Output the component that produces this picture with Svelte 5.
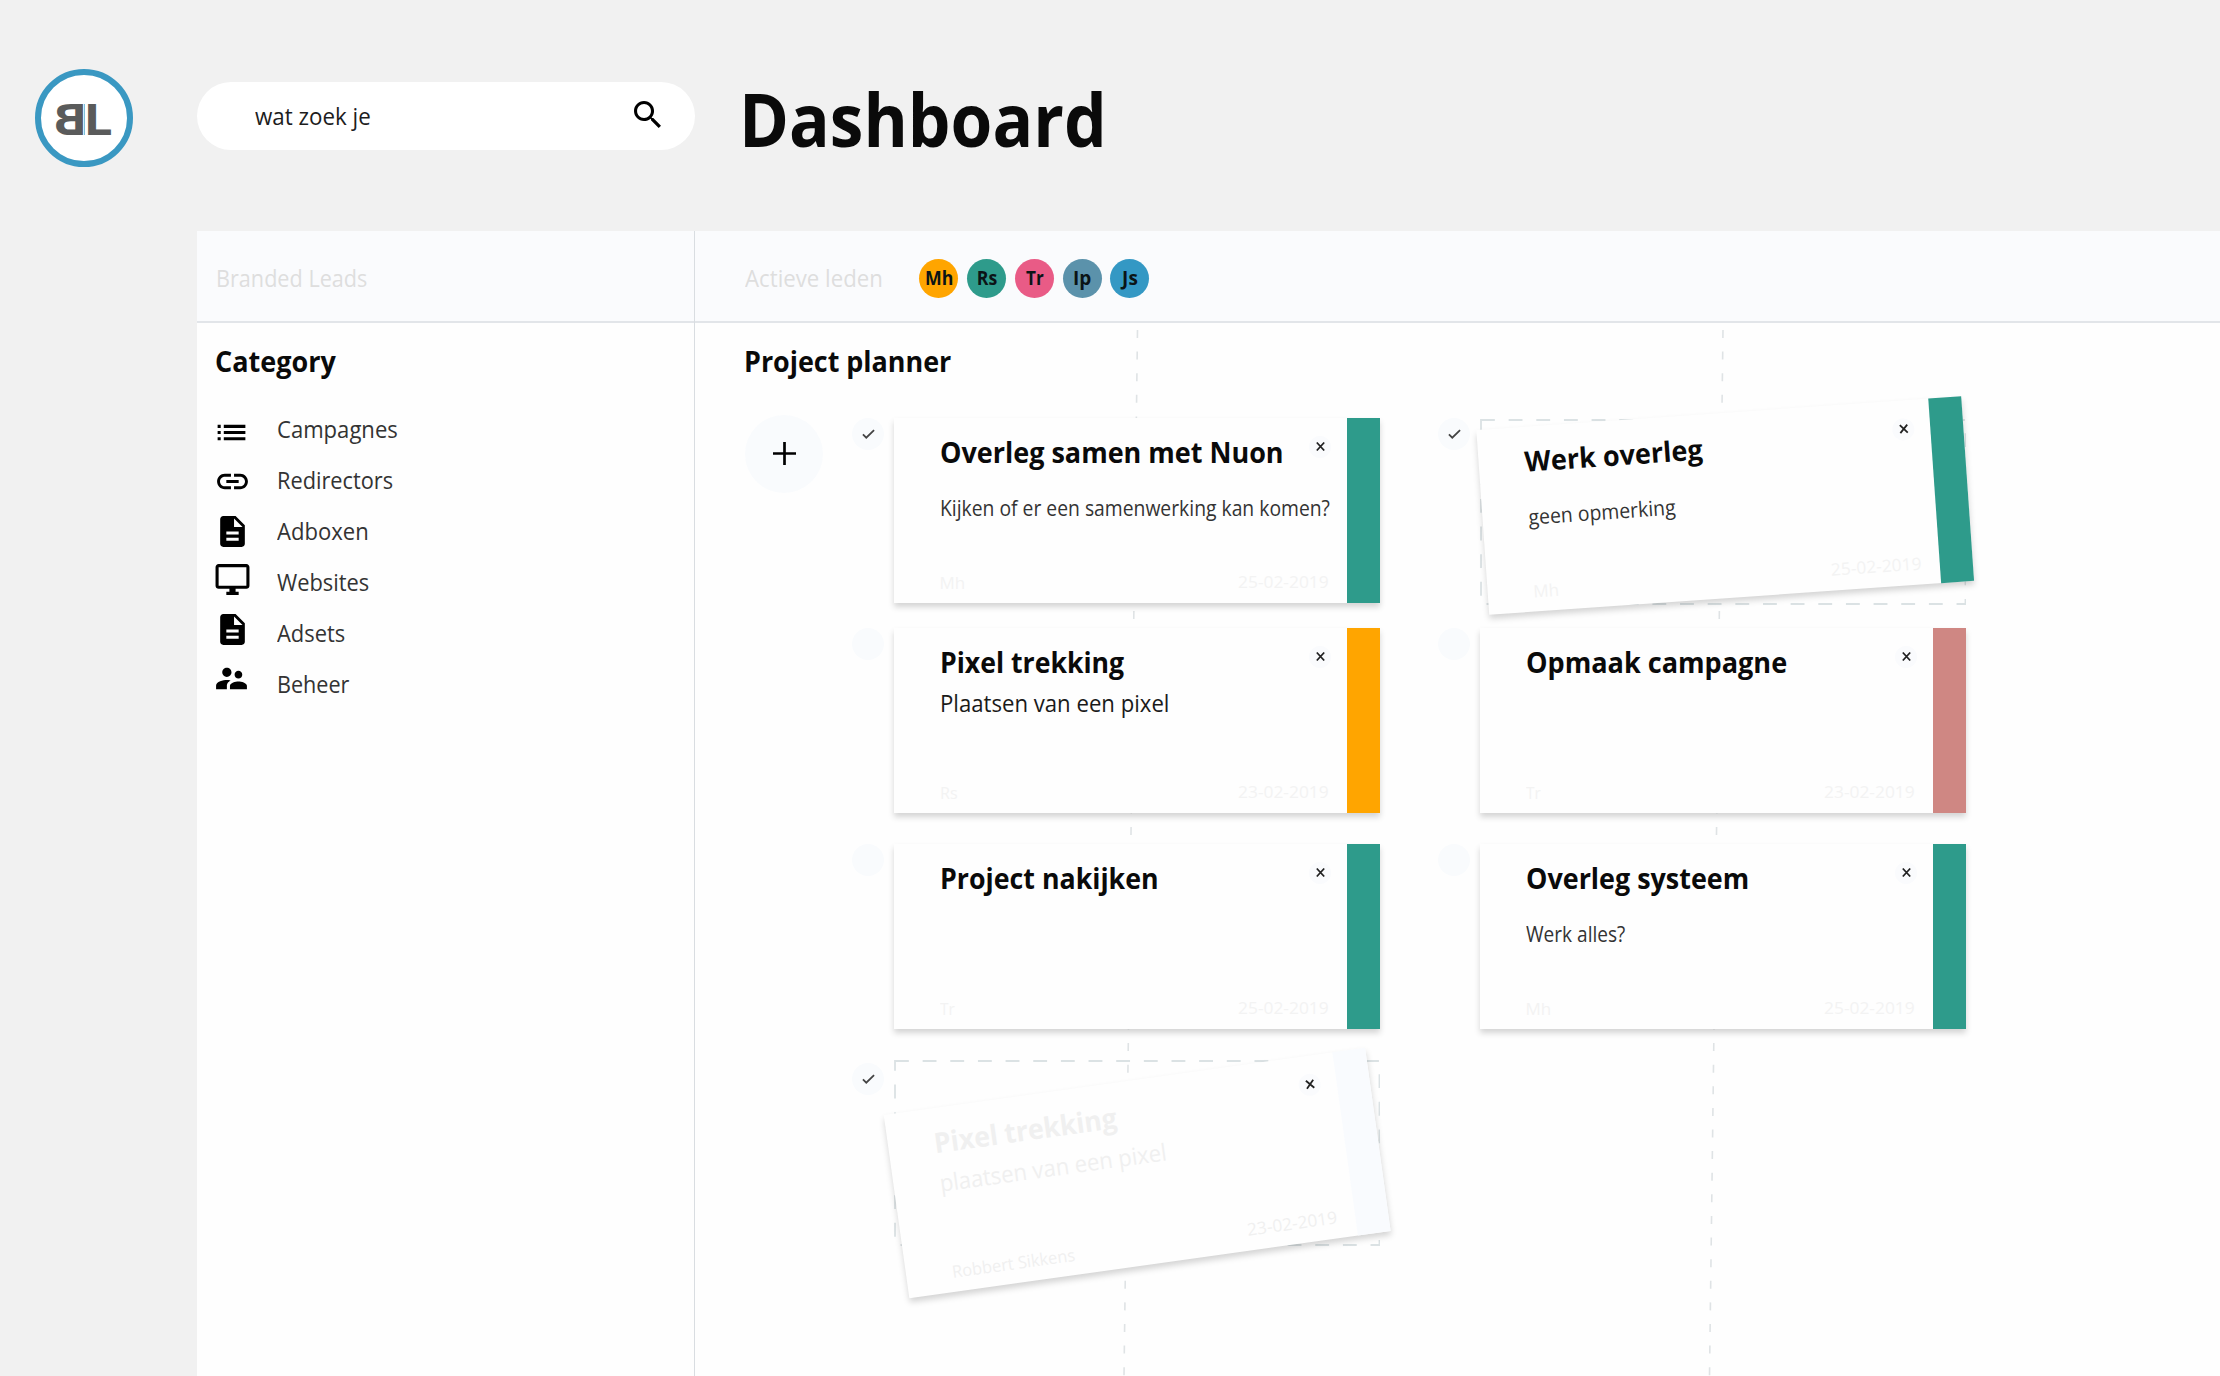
<script>
  const members = [
    { name: 'Mh', tone: 'orange', w: 28 },
    { name: 'Rs', tone: 'green', w: 20.5 },
    { name: 'Tr', tone: 'pink', w: 18 },
    { name: 'Ip', tone: 'steel', w: 18 },
    { name: 'Js', tone: 'blue', w: 16 },
  ];

  const listPath = 'M3 13h2v-2H3v2zm0 4h2v-2H3v2zm0-8h2V7H3v2zm4 4h14v-2H7v2zm0 4h14v-2H7v2zM7 7v2h14V7H7z';
  const linkPath = 'M3.9 12c0-1.71 1.39-3.1 3.1-3.1h4V7H7c-2.76 0-5 2.24-5 5s2.24 5 5 5h4v-1.9H7c-1.71 0-3.1-1.39-3.1-3.1zM8 13h8v-2H8v2zm9-6h-4v1.9h4c1.71 0 3.1 1.39 3.1 3.1s-1.39 3.1-3.1 3.1h-4V17h4c2.76 0 5-2.24 5-5s-2.24-5-5-5z';
  const docPath = 'M14 2H6c-1.1 0-1.99.9-1.99 2L4 20c0 1.1.89 2 1.99 2H18c1.1 0 2-.9 2-2V8l-6-6zm2 16H8v-2h8v2zm0-4H8v-2h8v2zm-3-5V3.500L18.500 9H13z';
  const screenPath = 'M21 2H3c-1.100 0-2 .9-2 2v12c0 1.100.9 2 2 2h7v2H8v2h8v-2h-2v-2h7c1.100 0 2-.9 2-2V4c0-1.100-.9-2-2-2zm0 14H3V4h18v12z';
  const peoplePath = 'M16.5 12c1.38 0 2.490-1.120 2.490-2.500S17.880 7 16.500 7 14 8.120 14 9.500s1.120 2.500 2.500 2.500zM9 11c1.660 0 2.990-1.340 2.990-3S10.660 5 9 5 6 6.340 6 8s1.340 3 3 3zm7.500 3c-1.830 0-5.500.92-5.500 2.750V19h11v-2.250c0-1.830-3.670-2.750-5.500-2.750zM9 13c-2.330 0-7 1.170-7 3.500V19h7v-2.250c0-.85.33-2.340 2.370-3.470C10.500 13.100 9.660 13 9 13z';

  const categories = [
    { label: 'Campagnes', w: 120.5, path: listPath, place: 'low left' },
    { label: 'Redirectors', w: 116, path: linkPath, place: 'low2' },
    { label: 'Adboxen', w: 92, path: docPath, place: 'mid' },
    { label: 'Websites', w: 92, path: screenPath, place: 'up' },
    { label: 'Adsets', w: 68.5, path: docPath, place: 'up1' },
    { label: 'Beheer', w: 72, path: peoplePath, place: 'up2 left' },
  ];

  const columns = [
    [
      { title: 'Overleg samen met Nuon', tw: 344, note: 'Kijken of er een samenwerking kan komen?', nw: 390, who: 'Mh', ww: 26, date: '25-02-2019', tone: 'green', done: true },
      { title: 'Pixel trekking', tw: 184.5, note: 'Plaatsen van een pixel', nw: 229, big: true, who: 'Rs', ww: 18, date: '23-02-2019', tone: 'orange' },
      { title: 'Project nakijken', tw: 219, who: 'Tr', ww: 14.5, date: '25-02-2019', tone: 'green' },
      { title: 'Pixel trekking', tw: 184.5, note: 'plaatsen van een pixel', nw: 229, big: true, who: 'Robbert Sikkens', ww: 124, date: '23-02-2019', tone: 'ghost', done: true, tilt: 'tilt-strong' },
    ],
    [
      { title: 'Werk overleg', tw: 178, note: 'geen opmerking', nw: 147, who: 'Mh', ww: 26, date: '25-02-2019', tone: 'green', done: true, tilt: 'tilt-soft' },
      { title: 'Opmaak campagne', tw: 261, who: 'Tr', ww: 14.5, date: '23-02-2019', tone: 'rose' },
      { title: 'Overleg systeem', tw: 223, note: 'Werk alles?', nw: 99, who: 'Mh', ww: 26, date: '25-02-2019', tone: 'green' },
    ],
  ];

  // Condenses a label horizontally to the given advance width.
  function fit(node, width) {
    const natural = node.offsetWidth;
    if (natural) node.style.transform = `scaleX(${width / natural})`;
  }
</script>

<div class="page">
  <header class="top">
    <div class="logo-cell">
      <div class="logo"><span class="b">B</span><i></i><span class="l">L</span></div>
    </div>
    <div class="search">
      <span class="fit" use:fit={116}>wat zoek je</span>
      <svg viewBox="3 3 17.5 17.5"><path d="M15.500 14h-.79l-.28-.27C15.410 12.590 16 11.110 16 9.500 16 5.910 13.090 3 9.500 3S3 5.910 3 9.500 5.910 16 9.500 16c1.610 0 3.090-.59 4.230-1.570l.27.28v.79l5 4.990L20.490 19l-4.990-5zm-6 0C7.010 14 5 11.990 5 9.500S7.010 5 9.500 5 14 7.010 14 9.500 11.990 14 9.500 14z" /></svg>
    </div>
    <h1><span class="fit" use:fit={368}>Dashboard</span></h1>
  </header>

  <div class="body">
    <aside>
      <div class="strip side"><span class="fit" use:fit={151.5}>Branded Leads</span></div>
      <h2><span class="fit" use:fit={120.5}>Category</span></h2>
      <nav>
        {#each categories as c}
          <a href="#top">
            <span class="ico {c.place}"><svg viewBox="0 0 24 24"><path d={c.path} /></svg></span>
            <span class="fit" use:fit={c.w}>{c.label}</span>
          </a>
        {/each}
      </nav>
    </aside>

    <main>
      <div class="strip">
        <span class="fit" use:fit={138}>Actieve leden</span>
        <div class="members">
          {#each members as m}
            <span class="avatar {m.tone}"><span class="fit mid" use:fit={m.w}>{m.name}</span></span>
          {/each}
        </div>
      </div>
      <svg class="threads" viewBox="0 0 1100 1053">
        <line x1="442.5" y1="7" x2="429" y2="1053" />
        <line x1="1028" y1="7" x2="1014.5" y2="1053" />
      </svg>
      <h2 class="planner"><span class="fit" use:fit={207.5}>Project planner</span></h2>
      <div class="board">
        <button class="add" aria-label="Toevoegen">
          <svg viewBox="0 0 24 24"><path d="M12 0v24M0 12h24" /></svg>
        </button>
        {#each columns as col}
          <div class="col">
            {#each col as t}
              <div class="slot">
                <span class="tick" class:lower={t.tone === 'ghost'}>
                  {#if t.done}<svg viewBox="0 0 14 10"><path d="M1 5.500 4.600 9 13 .8" /></svg>{/if}
                </span>
                <div class="place">
                  {#if t.tilt}
                    <svg class="outline" viewBox="0 0 486 188"><rect x="1" y="2" width="484.500" height="184" /></svg>
                  {/if}
                  <article class="card {t.tilt ?? ''}" class:faded={t.tone === 'ghost'}>
                    <div class="content">
                      <h3><span class="fit" use:fit={t.tw}>{t.title}</span></h3>
                      {#if t.note}
                        <p class:big={t.big}><span class="fit" use:fit={t.nw}>{t.note}</span></p>
                      {/if}
                      <footer>
                        <span class="fit" use:fit={t.ww}>{t.who}</span>
                        <span class="fit end" use:fit={91}>{t.date}</span>
                      </footer>
                    </div>
                    <div class="bar {t.tone}"></div>
                    <span class="close"><svg viewBox="0 0 9 9"><path d="M.8.5l7.400 8M8.200.5l-7.400 8" /></svg></span>
                  </article>
                </div>
              </div>
            {/each}
          </div>
        {/each}
      </div>
    </main>
  </div>
</div>

<style>
  :global(body) { background: #f1f1f1; }
  .page {
    width: 2220px;
    height: 1376px;
    overflow: hidden;
    background: #f1f1f1;
    font-family: 'Open Sans', 'Noto Sans', sans-serif;
    color: #0a0a0a;
    display: flex;
    flex-direction: column;
  }
  h1, h2, h3, p { margin: 0; font-weight: 700; }
  .fit { display: inline-block; white-space: nowrap; transform-origin: left center; }
  .fit.end { transform-origin: right center; }
  .fit.mid { transform-origin: center; }

  .top { display: flex; height: 231px; flex: none; }
  .logo-cell { width: 162px; padding: 69px 0 0 35px; }
  .logo {
    width: 98px;
    height: 98px;
    box-sizing: border-box;
    border: 6px solid #3a98c2;
    border-radius: 50%;
    background: #fff;
    display: flex;
    align-items: center;
    justify-content: center;
    font-weight: 700;
    font-size: 43px;
    line-height: 50px;
    color: #5a5b5b;
    padding: 1px 2.400px 0 0;
  }
  .logo .b { transform: scaleX(-1.18); }
  .logo i { width: 1px; height: 31px; background: #7fbfda; margin: 2px .4px 0 -.4px; }
  .logo .l { transform: scaleX(1.2); }
  .search {
    width: 498px;
    height: 68px;
    margin-top: 81.500px;
    border-radius: 34px;
    background: #fff;
    display: flex;
    align-items: center;
    box-sizing: border-box;
    padding: 1px 34.500px 0 57.500px;
    justify-content: space-between;
    font-size: 23.500px;
    color: #1d1d1d;
  }
  .search svg { width: 27px; height: 27px; margin-top: -3px; }
  h1 { font-size: 74px; line-height: 100px; margin: 69px 0 0 44px; }

  .body { flex: 1; display: flex; margin-left: 197px; background: #fefefe; }
  aside { width: 497px; border-right: 1px solid #d9dde1; }
  main { flex: 1; position: relative; }
  .strip {
    height: 86px;
    background: #fafbfd;
    border-bottom: 2px solid #e2e5e9;
    display: flex;
    align-items: center;
    font-size: 24px;
    line-height: 40px;
    color: #dedede;
    padding: 4px 0 0 49.500px;
  }
  .strip.side { padding-left: 18.500px; }
  .members { display: flex; gap: 8.800px; position: absolute; left: 224.300px; }
  .avatar {
    width: 39px;
    height: 39px;
    border-radius: 50%;
    display: flex;
    align-items: center;
    justify-content: center;
    font-size: 19px;
    line-height: 38px;
    font-weight: 700;
    color: #0b1416;
  }

  h2 { font-size: 28px; line-height: 40px; margin: 18px 0 0 18px; }
  h2.planner { margin-left: 48.500px; position: relative; }

  nav { margin-top: 23px; }
  nav a {
    display: flex;
    align-items: center;
    height: 50.900px;
    color: #333;
    text-decoration: none;
    font-size: 24px;
    line-height: 40px;
  }
  .ico { width: 63px; display: flex; padding-left: 16.500px; position: relative; }
  .ico svg { width: 37px; height: 37px; fill: #000; }
  .low { top: 3px; }
  .low2 { top: 1px; }
  .mid { top: 0; }
  .up { top: -3px; }
  .up1 { top: -3.500px; }
  .up2 { top: -5px; }
  .left { left: -1px; }

  .threads {
    position: absolute;
    left: 0;
    top: 92px;
    width: 1100px;
    height: 1053px;
  }
  .threads line { stroke: #dfe3e5; stroke-width: 1.600; stroke-dasharray: 8 13.610; }

  .board { display: flex; padding: 34px 0 0 50px; position: relative; }
  .add {
    width: 78px;
    height: 78px;
    border: 0;
    padding: 0;
    border-radius: 50%;
    background: #f9fbfd;
    display: flex;
    align-items: center;
    justify-content: center;
    margin-right: 28.500px;
  }
  .add svg { width: 23px; height: 23px; margin-top: -1px; }
  .add path { stroke: #000; stroke-width: 2.800; }
  .col { width: 528.500px; margin: 3px 57.500px 0 0; flex: none; height: 950px; }
  .slot { display: flex; justify-content: space-between; height: 185px; margin-bottom: 31px; }
  .slot:first-child { margin-bottom: 25px; }
  .slot:nth-child(4) { margin-top: -1px; }
  .tick {
    width: 32px;
    height: 32px;
    border-radius: 50%;
    background: #f9fbfd;
    display: flex;
    align-items: center;
    justify-content: center;
  }
  .tick.lower { margin-top: 3.500px; }
  .tick svg { width: 13px; height: 10px; margin-left: 1px; }
  .tick path { fill: none; stroke: #444; stroke-width: 1.900; }
  .place { width: 486px; position: relative; }
  .outline { position: absolute; left: 0; top: 0; width: 486px; height: 188px; }
  .outline rect { fill: none; stroke: #dbe2e4; stroke-width: 1.800; stroke-dasharray: 13.850 13.800; }
  .card {
    position: relative;
    height: 100%;
    display: flex;
    background: #fefefe;
    box-shadow: 0 4px 6px rgba(0, 0, 0, .17);
  }
  .tilt-soft { transform: translate(2.200px, -5px) rotate(-4deg); }
  .tilt-strong { transform: translate(.2px, 21.500px) rotate(-7.950deg); }
  .content {
    flex: 1;
    min-width: 0;
    box-sizing: border-box;
    display: flex;
    flex-direction: column;
    padding: 13.500px 18px 8px 45.500px;
  }
  h3 { font-size: 28px; line-height: 40px; }
  p { font-size: 21px; line-height: 30px; font-weight: 400; color: #333; margin-top: 21px; }
  p.big { font-weight: 400; font-size: 23.500px; margin-top: 6px; color: #1a1a1a; }
  footer {
    margin-top: auto;
    display: flex;
    justify-content: space-between;
    font-size: 17px;
    line-height: 24px;
    color: #f3f3f3;
  }
  footer .end { margin-top: -1px; }
  .faded h3, .faded p.big, .faded footer { color: #f0f0f0; }
  .bar { width: 33px; flex: none; }
  .close {
    position: absolute;
    left: 415.300px;
    top: 17.700px;
    width: 22px;
    height: 22px;
    border-radius: 50%;
    background: #fafbfd;
    display: flex;
    align-items: center;
    justify-content: center;
  }
  .close svg { width: 9px; height: 9px; overflow: visible; }
  .close path { stroke: #222; stroke-width: 1.800; }

  .orange { background: #ffa500; }
  .green { background: #2e9b8b; }
  .pink { background: #e95b86; }
  .steel { background: #5b92ab; }
  .blue { background: #3498c4; }
  .rose { background: #cf8783; }
  .ghost { background: #f9fbfe; }
</style>
